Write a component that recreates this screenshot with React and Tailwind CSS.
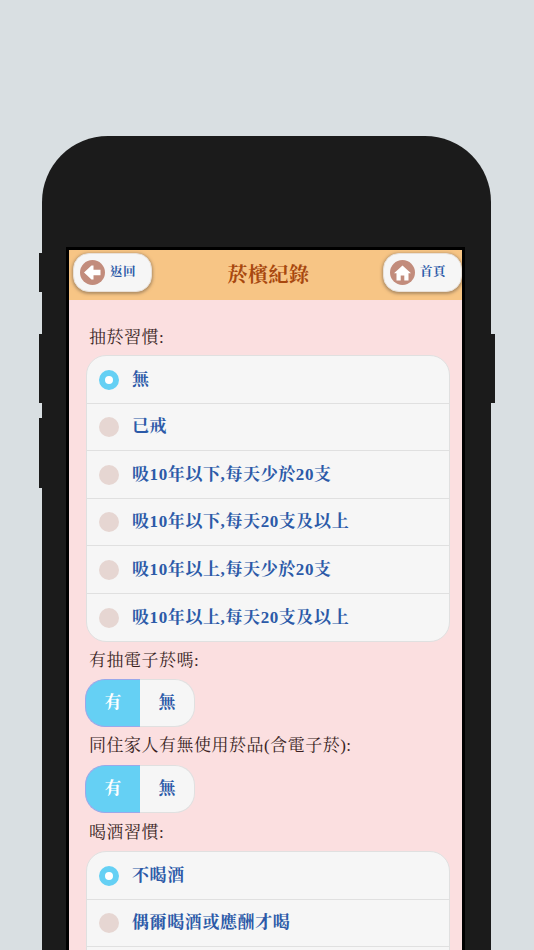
const FONT = "font-['Liberation_Serif','AR_PL_UMing_TW','Noto_Serif_CJK_TC','Noto_Sans_CJK_TC',serif]";

function Radio({ on }) {
  return on ? (
    <span className="w-5 h-5 rounded-full border-[6px] border-[#65d0f4] bg-white shrink-0" />
  ) : (
    <span className="w-5 h-5 rounded-full bg-[#e6d6d2] shrink-0" />
  );
}

function Row({ label, on }) {
  return (
    <div className="h-[47.5px] flex items-center pl-[12px] pt-[1px] gap-[13px] border-b border-[#e0e0e0] last:border-b-0">
      <Radio on={on} />
      <span className="pb-[1px] text-[17px] font-bold tracking-[0.6px] text-[#2c5aa8]">{label}</span>
    </div>
  );
}

function Card({ items }) {
  return (
    <div className="w-[364px] ml-[17px] rounded-[20px] border border-[#e0e0e0] bg-[#f6f6f6] overflow-hidden shrink-0">
      {items.map((t, i) => (
        <Row key={t} label={t} on={i === 0} />
      ))}
    </div>
  );
}

function Label({ children, className = "" }) {
  return <div className={`ml-[20px] text-[17px] tracking-[0.5px] leading-[20px] text-[#3a1f1f] ${className}`}>{children}</div>;
}

function Toggle() {
  return (
    <div className="ml-[16px] w-[110px] h-[48px] flex">
      <div className="w-[55px] rounded-l-[20px] bg-[#65d0f4] border border-r-0 border-[#9aa8ea] flex items-center justify-center text-white text-[17px] font-bold">有</div>
      <div className="flex-1 rounded-r-[20px] bg-[#f6f6f6] border border-l-0 border-[#e0e0e0] flex items-center justify-center text-[#2c5aa8] text-[17px] font-bold">無</div>
    </div>
  );
}

function NavButton({ icon, label }) {
  return (
    <div className="w-[79px] h-[39px] rounded-[16px] bg-[#f6f6f6] border border-[#e8e0d8] shadow-[0_1px_3px_1px_rgba(110,90,70,0.5)] flex items-center pl-[6px] gap-[5px]">
      <span className="w-[25px] h-[25px] rounded-full bg-[#c28c7c] flex items-center justify-center shrink-0">{icon}</span>
      <span className="text-[12.5px] font-bold tracking-[0.5px] text-[#2c5aa8]">{label}</span>
    </div>
  );
}

const BackIcon = (
  <svg width="17" height="15" viewBox="0 0 17 15"><path d="M0 7.5 L7.5 0.5 H9.5 V4.8 H16.5 V10.2 H9.5 V14.5 H7.5 Z" fill="#fff" /></svg>
);
const HomeIcon = (
  <svg width="17" height="16" viewBox="0 0 17 16"><path d="M8.5 0.5 L17 8.3 H14.5 V15.5 H10.3 V10.5 H6.7 V15.5 H2.5 V8.3 H0 Z" fill="#fff" /></svg>
);

export default function App() {
  return (
    <div className={`relative w-[534px] h-[950px] overflow-hidden bg-[#d9dfe2] pt-[136px] pl-[42px] ${FONT}`}>
      <div className="absolute left-[39px] top-[253px] w-[3px] h-[39px] bg-[#1b1b1b]" />
      <div className="absolute left-[39px] top-[334px] w-[3px] h-[69px] bg-[#1b1b1b]" />
      <div className="absolute left-[39px] top-[418px] w-[3px] h-[70px] bg-[#1b1b1b]" />
      <div className="absolute left-[491px] top-[334px] w-[4px] h-[69px] bg-[#1b1b1b]" />
      <div className="w-[449px] h-[900px] rounded-t-[66px] bg-[#1b1b1b] pt-[111px] pl-[24px]">
        <div className="w-[399px] h-[705.5px] bg-[#fbdfe0] border-[3px] border-black overflow-hidden">
          <div className="h-[50px] bg-[#f7c585] flex items-start justify-between pt-[3px] pl-[4px]">
            <NavButton icon={BackIcon} label="返回" />
            <div className="self-center -mt-[3px] ml-[2px] text-[20px] font-bold tracking-[0.5px] text-[#a8480f]">菸檳紀錄</div>
            <NavButton icon={HomeIcon} label="首頁" />
          </div>
          <div className="flex flex-col pt-[28px]">
            <Label className="mb-[7px]">抽菸習慣:</Label>
            <Card items={["無", "已戒", "吸10年以下,每天少於20支", "吸10年以下,每天20支及以上", "吸10年以上,每天少於20支", "吸10年以上,每天20支及以上"]} />
            <Label className="mt-[9px] mb-[8px]">有抽電子菸嗎:</Label>
            <Toggle />
            <Label className="mt-[9px] mb-[9px]">同住家人有無使用菸品(含電子菸):</Label>
            <Toggle />
            <Label className="mt-[10px] mb-[8px]">喝酒習慣:</Label>
            <Card items={["不喝酒", "偶爾喝酒或應酬才喝", ""]} />
          </div>
        </div>
      </div>
    </div>
  );
}
